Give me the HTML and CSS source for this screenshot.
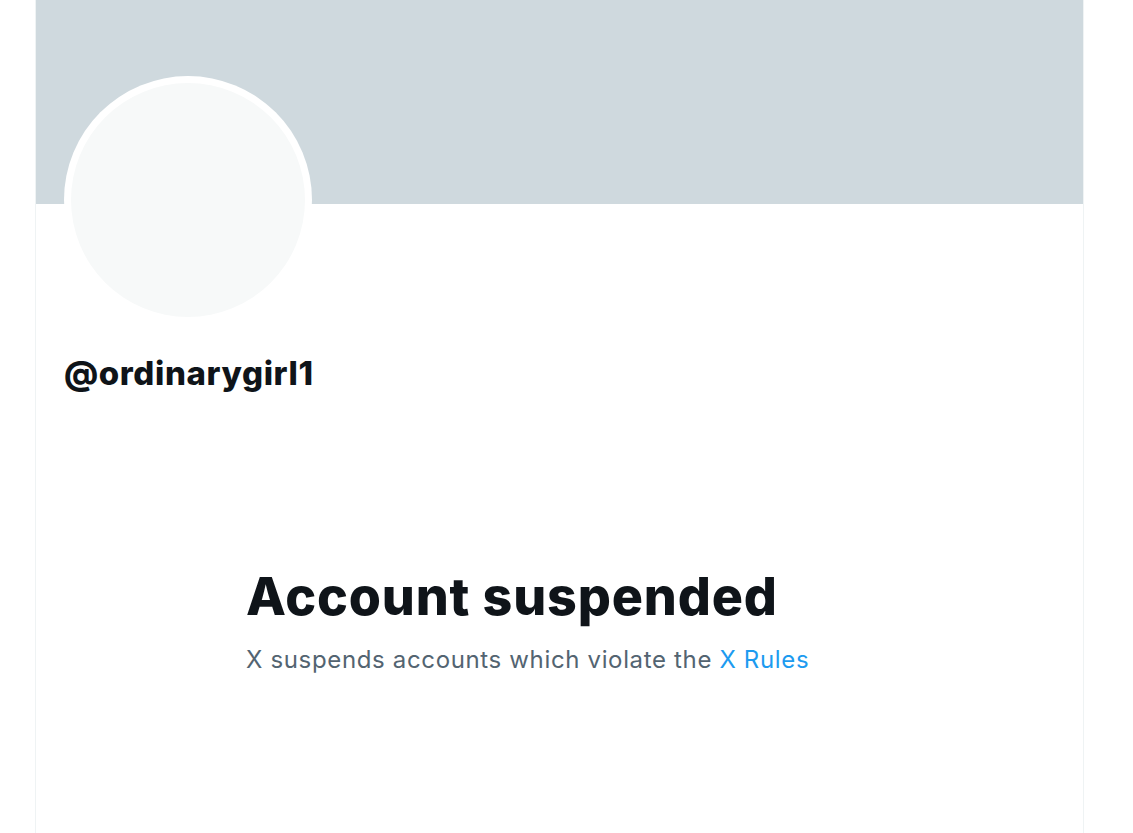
FILE: index.html
```html
<!DOCTYPE html>
<html lang="en">
<head>
<meta charset="utf-8">
<title>@ordinarygirl1 / X</title>
<link rel="stylesheet" href="styles.css">
</head>
<body>
<main class="column">
  <div class="banner"></div>
  <div class="profile">
    <div class="avatar"><div class="avatar-inner"></div></div>
    <div class="handle">@ordinarygirl1</div>
  </div>
  <section class="notice">
    <h1 class="notice-title">Account suspended</h1>
    <p class="notice-text">X suspends accounts which violate the <a class="notice-link" href="#">X Rules</a></p>
  </section>
</main>
</body>
</html>
```

FILE: styles.css
```css
html, body {
  margin: 0;
  padding: 0;
  background: #ffffff;
}
body {
  font-family: Inter, "Noto Sans", "Liberation Sans", sans-serif;
  color: #0f1419;
}
.column {
  margin-left: 35px;
  width: 1047px;
  min-height: 833px;
  border-left: 1px solid #eff3f4;
  border-right: 1px solid #eff3f4;
}
.banner {
  height: 204px;
  background: #cfd9de;
}
.profile {
  padding-left: 28px;
}
.avatar {
  width: 248px;
  height: 248px;
  margin-top: -128px;
  border-radius: 50%;
  background: #ffffff;
  display: flex;
  align-items: center;
  justify-content: center;
  position: relative;
}
.avatar-inner {
  width: 234px;
  height: 234px;
  border-radius: 50%;
  background: #f7f9f9;
}
.handle {
  margin-top: 29px;
  font-size: 33px;
  font-weight: 800;
  letter-spacing: 0.6px;
  line-height: 40px;
}
.notice {
  padding-left: 210px;
  margin-top: 173px;
}
.notice-title {
  margin: 0;
  font-size: 52px;
  font-weight: 800;
  line-height: 62px;
  letter-spacing: 0.85px;
}
.notice-text {
  margin: 16px 0 0;
  font-size: 24px;
  line-height: 32px;
  letter-spacing: 0.65px;
  color: #536471;
}
.notice-link {
  color: #1d9bf0;
  text-decoration: none;
}
```
